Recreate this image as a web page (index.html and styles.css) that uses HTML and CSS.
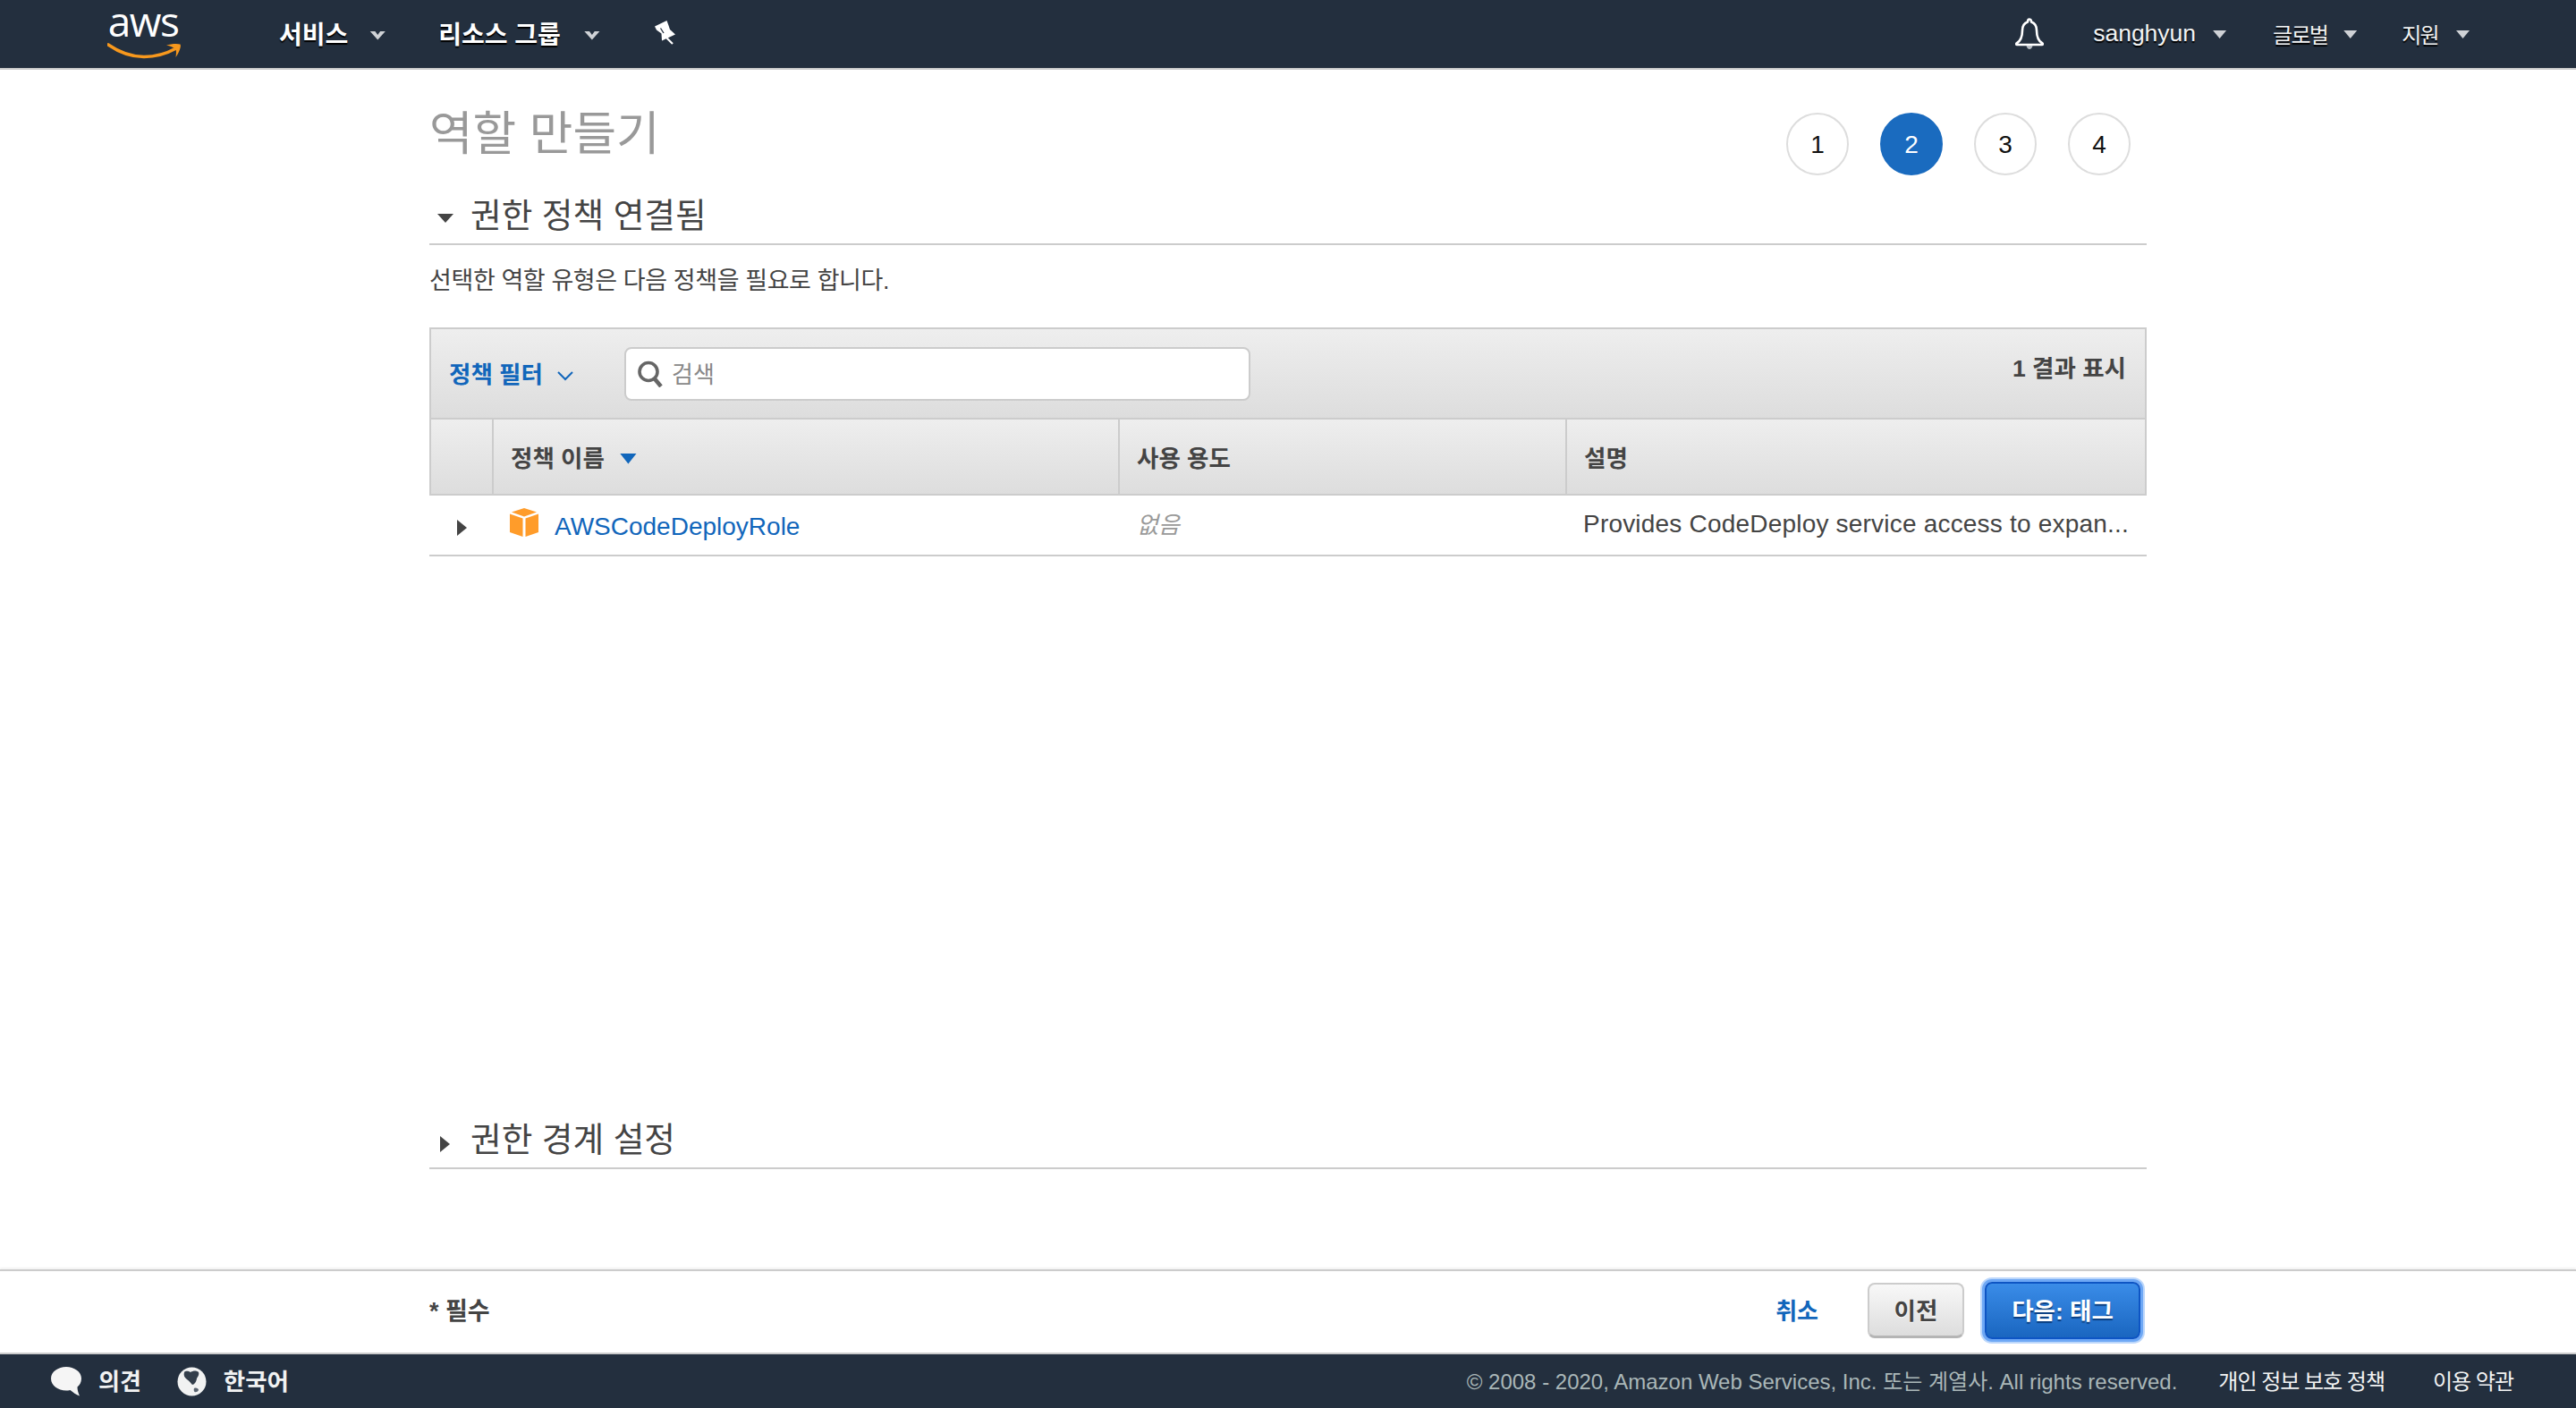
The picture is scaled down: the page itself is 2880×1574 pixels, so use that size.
FILE: index.html
```html
<!DOCTYPE html>
<html lang="ko">
<head>
<meta charset="utf-8">
<title>역할 만들기</title>
<link rel="stylesheet" href="styles.css">
</head>
<body>
<header class="topbar">
  <div class="logo">
    <span class="logo-text">aws</span>
    <svg class="logo-smile" width="84" height="19" viewBox="0 0 84 19"><path d="M1 2C14 11 27 15.500 41 15.500C54 15.500 67 11.500 77 6" fill="none" stroke="#f7981d" stroke-width="3.600" stroke-linecap="round"/><path d="M66 2.500C71 1 78 .5 81.500 1.500C83 4 80 11 76.500 16C77 12 77.500 8.500 76 6.500C74 5 70 3.500 66 2.500Z" fill="#f7981d"/></svg>
  </div>
  <nav class="nav-left">
    <a class="nav-main nav-services">서비스<i class="caret-v"></i></a>
    <a class="nav-main nav-groups">리소스 그룹<i class="caret-v"></i></a>
    <svg class="pin" width="26" height="30" viewBox="0 0 26 30"><path d="M1 8.500L14.500 2L16.500 7.500L18 12L24 17.500L9 24.500L8.500 16.500L3 12.500Z" fill="#fff"/><path d="M14.500 21.500L21 28" stroke="#fff" stroke-width="2.200" fill="none"/><path d="M7.500 10.500L11 16" stroke="#232f3e" stroke-width="1.300" fill="none"/></svg>
  </nav>
  <nav class="nav-right">
    <svg class="bell" width="32" height="36" viewBox="0 0 32 36"><path d="M16 1.500C14.500 1.500 14 3 14 4.500C9.500 6 8 9.500 8 14C8 21 6 26 1.500 28.500C1 29 1 30 2 30H30C31 30 31 29 30.500 28.500C26 26 24 21 24 14C24 9.500 22.500 6 18 4.500C18 3 17.500 1.500 16 1.500Z" fill="none" stroke="#fff" stroke-width="2.600" stroke-linejoin="round"/><path d="M12.500 31C13 33.500 14.500 35 16 35C17.500 35 19 33.500 19.500 31Z" fill="#b8bec5"/></svg>
    <a class="nav-sub nav-user">sanghyun<i class="caret-s caret-user"></i></a>
    <a class="nav-sub nav-ko nav-region">글로벌<i class="caret-s caret-region"></i></a>
    <a class="nav-sub nav-ko nav-support">지원<i class="caret-s caret-support"></i></a>
  </nav>
</header>

<main class="main">
  <div class="wizard-head">
    <h1 class="page-title">역할 만들기</h1>
    <ol class="steps">
      <li class="step">1</li>
      <li class="step step-active">2</li>
      <li class="step">3</li>
      <li class="step">4</li>
    </ol>
  </div>

  <section class="sec-open">
    <h2 class="sec-title"><i class="tri-down"></i>권한 정책 연결됨</h2>
    <p class="desc">선택한 역할 유형은 다음 정책을 필요로 합니다.</p>
  </section>

  <div class="table">
    <div class="filter-bar">
      <a class="filter-link">정책 필터<svg class="chev" width="20" height="12" viewBox="0 0 20 12"><path d="M2 2L10 10L18 2" fill="none" stroke="#1166bb" stroke-width="2"/></svg></a>
      <div class="search">
        <svg class="search-icon" width="30" height="30" viewBox="0 0 30 30"><circle cx="13" cy="12.500" r="10" fill="none" stroke="#666" stroke-width="3.600"/><path d="M19.500 20L27 29" stroke="#666" stroke-width="4.500" fill="none"/></svg>
        <span class="search-ph">검색</span>
      </div>
      <span class="count">1 결과 표시</span>
    </div>
    <div class="thead">
      <div class="th"></div>
      <div class="th">정책 이름<i class="sort-tri"></i></div>
      <div class="th">사용 용도</div>
      <div class="th th-last">설명</div>
    </div>
    <div class="trow">
      <div class="td td-arrow"><i class="tri-right"></i></div>
      <div class="td td-name">
        <svg class="cube" width="32" height="32" viewBox="0 0 32 32"><path d="M16 0L30 4.500L16 9.500L2 4.500Z" fill="#ff9c2a"/><path d="M0 6.500L14.500 11.500V32L0 27Z" fill="#ff9c2a"/><path d="M32 6.500L17.500 11.500V32L32 27Z" fill="#ff9c2a"/></svg>
        <a class="policy-link">AWSCodeDeployRole</a>
      </div>
      <div class="td td-usage">없음</div>
      <div class="td td-desc">Provides CodeDeploy service access to expan...</div>
    </div>
  </div>

  <section class="sec-closed">
    <h2 class="sec-title sec-title-closed"><i class="tri-right tri-right-lg"></i>권한 경계 설정</h2>
  </section>
</main>

<div class="actionbar">
  <div class="action-inner">
    <span class="required">* 필수</span>
    <div class="actions">
      <a class="cancel">취소</a>
      <button class="btn btn-prev">이전</button>
      <button class="btn btn-next">다음: 태그</button>
    </div>
  </div>
</div>

<footer class="footer">
  <div class="foot-left">
    <svg class="foot-icon" width="34" height="33" viewBox="0 0 34 33"><path d="M17 0C26 0 34 5.500 34 13C34 17.500 32 20.500 29.500 22.500C29.500 26 30.500 29 32 32.500C28 31 24.500 28.500 21.500 26C19.500 26.400 18.500 26.500 17 26.500C8 26.500 0 21 0 13C0 5.500 8 0 17 0Z" fill="#f5f5f5"/></svg>
    <span class="foot-label foot-feedback">의견</span>
    <svg class="foot-icon" width="33" height="33" viewBox="0 0 33 33"><circle cx="16.500" cy="16.500" r="16" fill="#f1f2f2"/><path d="M8 6C10 4 13 5 15 6C18 4 22 4 24 6C25 9 23 11 22 13C21.500 17 19 20 17 20C15 18 14 16 11 14C8 12 7 9 8 6Z" fill="#333e4b"/><path d="M19 24C21 23 24 24 24 26C23 28 21 28.500 19.500 28C18.500 27 18.500 25 19 24Z" fill="#59636f"/></svg>
    <span class="foot-label foot-lang">한국어</span>
  </div>
  <div class="foot-right">
    <span class="copyright">© 2008 - 2020, Amazon Web Services, Inc. 또는 계열사. All rights reserved.</span>
    <a class="foot-link foot-privacy">개인 정보 보호 정책</a>
    <a class="foot-link">이용 약관</a>
  </div>
</footer>
</body>
</html>
```

FILE: styles.css
```css
* { box-sizing: border-box; }
html, body { height: 100%; }
body {
  margin: 0;
  height: 100vh;
  overflow: hidden;
  display: flex;
  flex-direction: column;
  background: #fff;
  color: #444;
  font-family: "Liberation Sans", "Noto Sans CJK KR", sans-serif;
  font-size: 26px;
}
i { display: inline-block; font-style: normal; }

/* top bar */
.topbar {
  flex: none;
  height: 78px;
  background: #232f3e;
  border-bottom: 2px solid #ccc;
  display: flex;
  align-items: center;
  padding-left: 120px;
  color: #fff;
}
.logo { width: 84px; display: flex; flex-direction: column; align-items: center; margin-top: -6px; }
.logo-text {
  font-family: "Open Sans", sans-serif;
  font-size: 46px;
  line-height: 38px;
  letter-spacing: -1.500px;
  color: #fff;
  margin: 0 2px 0 -2px;
}
.logo-smile { display: block; margin-top: 6px; }
.nav-left { display: flex; align-items: center; margin-left: 108px; }
.nav-main { font-size: 28px; font-weight: 700; text-shadow: 0 2px 1px #000; display: flex; align-items: center; margin-top: -3px; }
.nav-groups { margin-left: 59px; }
.nav-groups .caret-v { margin-left: 26px; }
.pin { margin-left: 60px; margin-top: -4px; }
.caret-v {
  width: 18px; height: 10px; margin-left: 24px; margin-top: 6px;
  background: #cfd2d6;
  clip-path: polygon(0 0, 32% 0, 50% 45%, 68% 0, 100% 0, 50% 100%);
}
.nav-right { margin-left: auto; display: flex; align-items: center; padding-right: 119px; }
.nav-sub { display: flex; align-items: center; color: #f2f3f3; text-shadow: 0 2px 1px #000; margin-top: -2px; }
.nav-user { font-size: 26.500px; margin-left: 55px; }
.nav-ko { font-size: 24px; letter-spacing: -1.700px; }
.nav-region { margin-left: 52px; }
.nav-support { margin-left: 50px; }
.caret-s {
  width: 15px; height: 9px; margin-left: 17px; margin-top: 3px;
  background: #cfd2d6;
  clip-path: polygon(0 0, 100% 0, 50% 100%);
}
.caret-user { margin-left: 19px; }
.caret-region { margin-left: 18px; }
.caret-support { margin-left: 20px; }

/* main */
.main {
  flex: 1;
  min-height: 0;
  width: 1920px;
  margin: 0 auto;
  display: flex;
  flex-direction: column;
}
.wizard-head { height: 118px; display: flex; justify-content: space-between; align-items: flex-start; padding-right: 18px; padding-top: 48px; }
.page-title {
  margin: -11px 0 0;
  font-size: 52.800px;
  line-height: 70px;
  font-weight: 400;
  color: #999;
}
.steps { list-style: none; margin: 0; padding: 0; display: flex; gap: 35px; }
.step {
  width: 70px; height: 70px;
  border: 2px solid #ddd;
  border-radius: 50%;
  display: flex; align-items: center; justify-content: center;
  padding-top: 2px;
  font-size: 28px;
  color: #111;
  background: #fff;
}
.step-active { background: #1a6bbf; border-color: #1a6bbf; color: #fff; }

.sec-title {
  margin: 0;
  height: 78px;
  border-bottom: 2px solid #ccc;
  display: flex;
  align-items: flex-end;
  padding-bottom: 6px;
  font-size: 37.700px;
  line-height: 50px;
  font-weight: 400;
  color: #444;
}
.tri-down {
  width: 18px; height: 10px;
  margin: 0 19px 17px 9px;
  background: #444;
  clip-path: polygon(0 0, 100% 0, 50% 100%);
}
.desc { margin: 22px 0 0; height: 70px; font-size: 27px; line-height: 36px; letter-spacing: -.4px; color: #444; }

/* table */
.table { border-bottom: 2px solid #ccc; }
.filter-bar {
  height: 103px;
  border: 2px solid #ccc;
  background: linear-gradient(#eee, #ddd);
  display: flex;
  align-items: center;
  padding: 0 21px 0 20px;
}
.filter-link { display: flex; align-items: center; width: 196px; font-size: 26.500px; font-weight: 700; color: #1166bb; margin-top: -2px; }
.chev { margin: 6px 0 0 15px; }
.search {
  width: 700px; height: 60px;
  background: #fff;
  border: 2px solid #ccc;
  border-radius: 8px;
  display: flex; align-items: center;
  padding-left: 12px;
}
.search-icon { flex: none; }
.search-ph { margin-left: 9px; color: #888; margin-top: -2px; }
.count { margin-left: auto; margin-top: -17px; font-size: 26.500px; font-weight: 700; color: #444; }
.thead {
  height: 85px;
  border: 2px solid #ccc;
  border-top: 0;
  background: linear-gradient(#eee, #ddd);
  display: grid;
  grid-template-columns: 70px 700px 500px 1fr;
}
.th {
  display: flex; align-items: center;
  padding-left: 19px;
  font-size: 26.500px;
  font-weight: 700;
  border-right: 2px solid #ccc;
}
.th-last { border-right: 0; }
.sort-tri {
  width: 19px; height: 12px; margin: 4px 0 0 17px;
  background: #1166bb;
  clip-path: polygon(0 0, 100% 0, 50% 100%);
}
.trow {
  height: 66px;
  display: grid;
  grid-template-columns: 71px 700px 500px 1fr;
  align-items: center;
}
.td-arrow { padding-left: 31px; padding-top: 6px; display: flex; }
.tri-right {
  width: 11px; height: 18px;
  background: #444;
  clip-path: polygon(0 0, 100% 50%, 0 100%);
}
.td-name { display: flex; align-items: center; padding-left: 19px; }
.cube { flex: none; margin-top: -6px; }
.policy-link { margin-left: 18px; font-size: 28px; color: #1166bb; margin-top: 4px; }
.td-usage { padding-left: 20px; font-style: italic; color: #999; margin-top: -5px; }
.td-desc { padding-left: 19px; font-size: 28px; letter-spacing: .2px; color: #444; white-space: nowrap; margin-top: -2px; }

.sec-closed { margin-top: auto; padding-bottom: 112px; }
.sec-title-closed { height: auto; padding-bottom: 6px; }
.tri-right-lg { margin: 0 23px 11px 12px; }

/* action bar */
.actionbar {
  flex: none;
  height: 95px;
  border-top: 2px solid #ccc;
  border-bottom: 2px solid #ccc;
  box-shadow: 0 -2px 2px rgba(0,0,0,.05);
}
.action-inner {
  width: 1920px; height: 100%;
  margin: 0 auto;
  display: flex; align-items: center; justify-content: space-between;
  padding: 0 7px 3px 0;
}
.required { font-size: 27px; font-weight: 700; color: #444; margin-top: -3px; }
.actions { display: flex; align-items: center; }
.cancel { font-weight: 700; color: #1166bb; margin-right: 55px; margin-top: -3px; }
.btn {
  font-family: inherit; font-size: 26.500px; font-weight: 700;
  border-radius: 8px;
  padding: 0 0 3px;
  display: flex; align-items: center; justify-content: center;
}
.btn-prev {
  width: 108px; height: 62px;
  border: 2px solid #ccc;
  border-bottom: 3px solid #b5b5b5;
  background: linear-gradient(#f8f8f8, #ddd);
  color: #444;
  text-shadow: 0 1px 0 #fff;
  margin-right: 23px;
}
.btn-next {
  width: 174px; height: 64px;
  border: 2px solid #0e55c4;
  background: linear-gradient(#3a8ce8, #1a66c0);
  color: #fff;
  text-shadow: 0 2px 1px #0b3f80;
  box-shadow: 0 0 0 3px #6ea8f5, 0 0 0 5px #bcd7fb;
}

/* footer */
.footer {
  flex: none;
  height: 60px;
  background: #232f3e;
  display: flex;
  align-items: center;
  padding: 0 70px 3px 57px;
}
.foot-left { display: flex; align-items: center; }
.foot-icon { margin-top: 3px; }
.foot-label { font-weight: 700; color: #f1f2f2; margin-left: 19px; }
.foot-feedback { margin-right: 40px; }
.foot-lang { font-size: 26.500px; }
.foot-right { margin-left: auto; display: flex; align-items: center; }
.copyright { color: #aab7b8; font-size: 24px; margin-top: -1px; }
.foot-link { color: #f2f3f3; font-size: 24px; letter-spacing: -1px; }
.foot-privacy { margin: 0 54px 0 46px; }
```
